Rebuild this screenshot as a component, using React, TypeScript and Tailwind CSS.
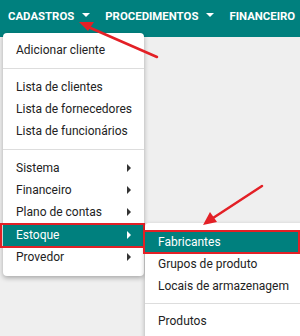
import React from 'react';

const Caret: React.FC = () => (
  <span className="inline-block w-0 h-0 border-x-[4px] border-x-transparent border-t-[4px] border-t-white ml-[8px] mb-[2px]" />
);

const Arrow: React.FC = () => (
  <span className="ml-auto inline-block w-0 h-0 border-y-[4px] border-y-transparent border-l-[4px] border-l-[#333]" />
);

const menuItem = 'flex items-center h-[22px] px-[13px] text-[12px] text-[#222] whitespace-nowrap';

const App: React.FC = () => {
  return (
    <div className="relative w-[300px] h-[336px] overflow-hidden bg-[#efefef]" style={{ fontFamily: 'Roboto, "Liberation Sans", sans-serif' }}>
      <div className="flex items-center h-[37px] pb-[4px] bg-[#00807e] text-white text-[11.4px] font-bold whitespace-nowrap">
        <div className="flex items-center pl-[8px]">CADASTROS<Caret /></div>
        <div className="flex items-center pl-[15px]">PROCEDIMENTOS<Caret /></div>
        <div className="flex items-center pl-[15px]">FINANCEIRO</div>
      </div>

      <div className="absolute left-[3px] top-[33px] w-[141px] bg-white rounded-[4px] shadow-[0_2px_5px_rgba(0,0,0,0.3)] pt-[6px] pb-[8px]">
        <div className={menuItem}>Adicionar cliente</div>
        <div className="my-[7px] border-t border-[#ddd]" />
        <div className={menuItem}>Lista de clientes</div>
        <div className={menuItem}>Lista de fornecedores</div>
        <div className={menuItem}>Lista de funcionários</div>
        <div className="my-[7px] border-t border-[#ddd]" />
        <div className={menuItem}>Sistema<Arrow /></div>
        <div className={menuItem}>Financeiro<Arrow /></div>
        <div className={menuItem}>Plano de contas<Arrow /></div>
        <div className="relative flex items-center h-[22px] px-[13px] text-[12px] text-white bg-[#00807e] mt-[1px]">
          Estoque
          <span className="ml-auto inline-block w-0 h-0 border-y-[4px] border-y-transparent border-l-[4px] border-l-white" />
          <div className="absolute left-[-3px] right-[-1px] top-[-1px] bottom-[-2px] border-2 border-[#e32026]" />
        </div>
        <div className={menuItem}>Provedor<Arrow /></div>
      </div>

      <div className="absolute left-[145px] top-[223px] w-[170px] bg-white rounded-[4px] shadow-[0_2px_5px_rgba(0,0,0,0.3)] pt-[8px] pb-[8px]">
        <div className="relative flex items-center h-[22px] px-[13px] text-[12px] text-white bg-[#00807e]">
          Fabricantes
          <div className="absolute left-[-2px] right-[15px] top-[-1px] bottom-[-1px] border-2 border-[#e32026]" />
        </div>
        <div className={menuItem}>Grupos de produto</div>
        <div className={menuItem}>Locais de armazenagem</div>
        <div className="my-[6px] border-t border-[#ddd]" />
        <div className={menuItem}>Produtos</div>
      </div>

      <svg className="absolute left-0 top-0" width="300" height="336" viewBox="0 0 300 336">
        <line x1="157" y1="57" x2="86" y2="26" stroke="#e32026" strokeWidth="2.5" strokeLinecap="round" />
        <polygon points="79,22 94,22 88,31" fill="#e32026" />
        <line x1="262" y1="186" x2="210" y2="220" stroke="#e32026" strokeWidth="2.5" strokeLinecap="round" />
        <polygon points="203,225 210,212 217,222" fill="#e32026" />
      </svg>
    </div>
  );
};

export default App;
